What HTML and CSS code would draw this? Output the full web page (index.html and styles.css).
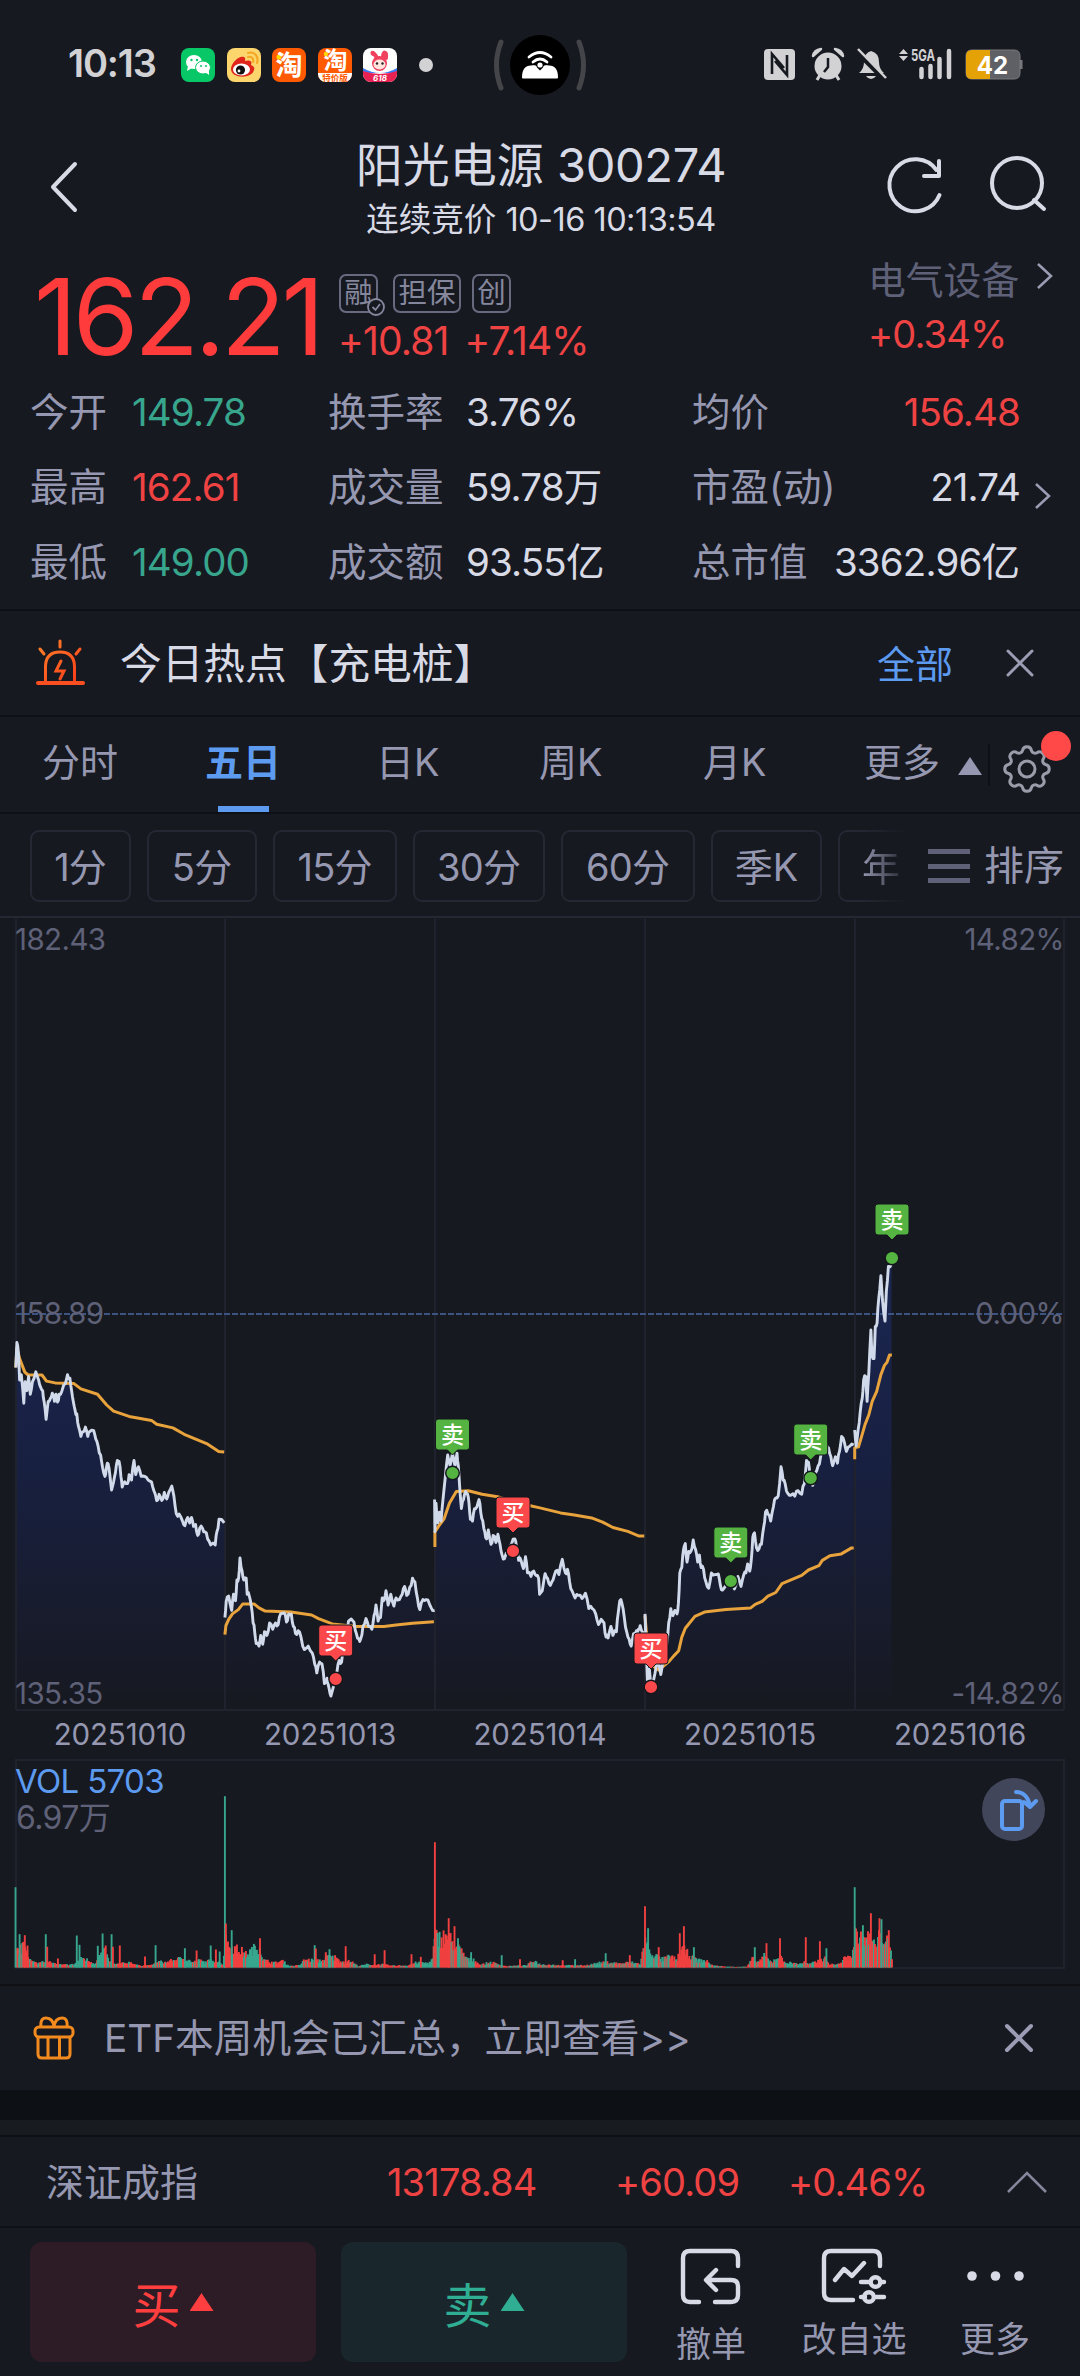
FILE: index.html
```html
<!DOCTYPE html>
<html lang="zh-CN">
<head>
<meta charset="utf-8">
<title>阳光电源 300274</title>
<link rel="stylesheet" href="styles.css">
</head>
<body>
<div class="screen">
  <div class="status">
    <span class="clock">10:13</span>
    <div class="apps">
      <svg class="app" viewBox="0 0 34 34"><rect width="34" height="34" rx="8" fill="#08c767"/><ellipse cx="13" cy="14" rx="8" ry="7" fill="#fff"/><path d="M7 18l-1 5 5-3z" fill="#fff"/><ellipse cx="22" cy="19.500" rx="7.500" ry="6.500" fill="#fff" stroke="#08c767"/><path d="M24 24l4 3v-5z" fill="#fff"/><circle cx="10.500" cy="12" r="1.200" fill="#08c767"/><circle cx="16" cy="12" r="1.200" fill="#08c767"/><circle cx="20" cy="18" r="1" fill="#08c767"/><circle cx="25" cy="18" r="1" fill="#08c767"/></svg>
      <svg class="app" viewBox="0 0 34 34"><rect width="34" height="34" rx="8" fill="#fcd56c"/><path d="M4 21c0-6 8-14 13-12 2 1 1 3 1 4 3-1 8-1 6 4 3 1 4 3 3 5-2 9-23 9-23-1z" fill="#e1251b"/><ellipse cx="14.500" cy="21.500" rx="8.500" ry="6" fill="#fff"/><circle cx="13.500" cy="22" r="4.600" fill="#111"/><circle cx="12" cy="23" r="1.400" fill="#fff"/><path d="M21 9c4-1 6 2 5 5M21 5c7-2 11 4 9 10" fill="none" stroke="#f5a623" stroke-width="2" stroke-linecap="round"/></svg>
      <svg class="app" viewBox="0 0 34 34"><rect width="34" height="34" rx="8" fill="#ff5a00"/><circle cx="7" cy="9" r="2.500" fill="#ffd800"/><text x="17" y="27" class="tao" font-size="27">淘</text></svg>
      <svg class="app" viewBox="0 0 34 34"><clipPath id="r"><rect width="34" height="34" rx="8"/></clipPath><g clip-path="url(#r)"><rect width="34" height="34" fill="#ff5a00"/><rect y="25" width="34" height="9" fill="#fff"/></g><circle cx="8" cy="6" r="2.200" fill="#ffd800"/><text x="17.500" y="21" class="tao" font-size="24">淘</text><text x="17" y="32.500" class="tao-sub" font-size="8.500">特价版</text></svg>
      <svg class="app" viewBox="0 0 34 34"><g clip-path="url(#r)"><rect width="34" height="34" fill="#fff"/><path d="M0 20q17 10 34 0v5H0z" fill="#3c7bf6"/><path d="M0 23q17 6 34 0v11H0z" fill="#e82252"/></g><path d="M14 10c-2-4-6-7-4-4M20 9c0-6 4-6 3 1" fill="none" stroke="#f0425f" stroke-width="4" stroke-linecap="round"/><circle cx="16.500" cy="15.500" r="7.500" fill="#f0425f"/><ellipse cx="16.500" cy="16.500" rx="6" ry="5" fill="#ffe4de"/><circle cx="14" cy="15.500" r="1.200" fill="#222"/><circle cx="19.500" cy="15.500" r="1.200" fill="#222"/><text x="17" y="32.500" class="promo" font-size="8">618</text></svg>
      <i class="dot"></i>
    </div>
    <svg class="island" viewBox="490 33 100 64"><circle cx="540" cy="65" r="30" fill="#000"/><path d="M501 42q-9 23 0 46M579 42q9 23 0 46" fill="none" stroke="#444549" stroke-width="5" stroke-linecap="round"/><path d="M522 77.500c0-8 3-12 9-12 3 0 5-1 6 2l3 3 3-3c1-3 3-2 6-2 6 0 9 4 9 12q0 1-1 1h-34q-1 0-1-1z" fill="#fff"/><path d="M529 57q11-9 22 0M533 62q7-6 14 0" fill="none" stroke="#fff" stroke-width="2.800" stroke-linecap="round"/><circle cx="540" cy="65" r="2.600" fill="#fff"/></svg>
    <svg class="tray" viewBox="760 44 264 42">
      <rect x="764" y="49" width="31" height="31" rx="4" fill="#d2d2d4"/><path d="M772 74V54l12 14M787 55v20L775 61" fill="none" stroke="#171921" stroke-width="2.600"/>
      <g fill="#d2d2d4"><circle cx="828" cy="66" r="13.500"/><path d="M813 56q1-6 8-7zM843 56q-1-6-8-7z" stroke="#d2d2d4" stroke-width="2.500" stroke-linejoin="round"/></g><path d="M820 75l-3 5M836 75l3 5" stroke="#d2d2d4" stroke-width="3"/><path d="M828 58v9l-4 5" fill="none" stroke="#171921" stroke-width="2.500"/>
      <path d="M859 73q5-4 5-11 0-9 7-11 8 2 8 11 0 7 5 11zM866 76h10q-2 3-5 3t-5-3z" fill="#d2d2d4"/><path d="M856 51l29 29" stroke="#171921" stroke-width="5"/><path d="M858 49l28 29" stroke="#d2d2d4" stroke-width="2.500"/>
      <path d="M899 54l4.500-5 4.500 5zM899 56l4.500 5 4.500-5z" fill="#d2d2d4"/><text x="911" y="61" font-size="16" font-weight="700" fill="#d2d2d4" textLength="24" lengthAdjust="spacingAndGlyphs">5GA</text>
      <path d="M921.500 69v8M930.500 66v11M939.500 59v18M949 51v26" stroke="#d2d2d4" stroke-width="4.500" stroke-linecap="round"/>
      <path d="M972 50h42q6 0 6 6v17q0 6-6 6h-42q-6 0-6-6V56q0-6 6-6z" fill="#5f6065" stroke="#77787d"/><path d="M990 50v29h-18q-6 0-6-6V56q0-6 6-6z" fill="#e5a207"/><rect x="1020" y="60" width="2.500" height="9" fill="#77787d"/><text x="992.500" y="73.500" font-size="24" font-weight="700" fill="#fff" text-anchor="middle">42</text>
    </svg>
  </div>

  <div class="header">
    <svg class="back" viewBox="0 0 34 54"><path d="M28 4L6 27l22 23"/></svg>
    <div class="titles"><div class="title">阳光电源 <span class="n">300274</span></div><div class="subtitle">连续竞价 <span class="n">10-16 10:13:54</span></div></div>
    <svg class="tools" viewBox="884 152 166 64"><path d="M939.500 195a26 26 0 1 1-3-25M939 161v15h-15"/><circle cx="1017" cy="183" r="25"/><path d="M1034 200l10 9"/></svg>
  </div>

  <div class="quote">
    <div class="price n">162.21</div>
    <div class="moves">
      <div class="tags"><span class="tag">融<svg viewBox="0 0 18 18"><circle cx="9" cy="9" r="8"/><path d="M5.500 9l3 3 4.500-6"/></svg></span><span class="tag wide">担保</span><span class="tag">创</span></div>
      <div class="change n"><span>+10.81</span><span>+7.14%</span></div>
    </div>
    <div class="sector"><div class="sector-name">电气设备<svg viewBox="0 0 18 28"><path d="M2 2l13 12L2 26"/></svg></div><div class="sector-pct n">+0.34%</div></div>
  </div>

  <div class="stats">
    <span>今开</span><b class="n down">149.78</b><span>换手率</span><b class="n">3.76%</b><span>均价</span><b class="n up end">156.48</b><i></i>
    <span>最高</span><b class="n up">162.61</b><span>成交量</span><b><em class="n">59.78</em>万</b><span>市盈<em>(动)</em></span><b class="n end">21.74</b><i><svg viewBox="0 0 18 28"><path d="M2 2l13 12L2 26"/></svg></i>
    <span>最低</span><b class="n down">149.00</b><span>成交额</span><b><em class="n">93.55</em>亿</b><span>总市值</span><b class="end"><em class="n">3362.96</em>亿</b><i></i>
  </div>

  <div class="hot">
    <svg class="siren" viewBox="36 636 48 50"><defs><linearGradient id="s" gradientUnits="userSpaceOnUse" x1="40" y1="640" x2="80" y2="684"><stop stop-color="#ff8228"/><stop offset="1" stop-color="#fa3519"/></linearGradient></defs><path d="M45.500 680v-15q0-15 14.500-15t14.500 15v15M60 639v6M40 647l4 5M80 647l-4 5M61 659l-5 10h8l-4 8" stroke="url(#s)"/><path d="M38 681h45" stroke="#f94f21" stroke-width="4"/></svg>
    <span class="hot-text">今日热点【充电桩】</span><span class="all">全部</span>
    <svg class="close" viewBox="0 0 28 28"><path d="M2 2l24 24M26 2L2 26"/></svg>
  </div>

  <div class="tabs">
    <span>分时</span><span class="on">五日</span><span>日K</span><span>周K</span><span>月K</span><span class="more">更多<i class="tri"></i></span>
    <div class="gear"><svg viewBox="-25 -25 50 50"><path id="gear"/><circle r="8"/></svg><i class="badge"></i></div>
  </div>

  <div class="pills">
    <span><em class="n">1</em>分</span><span><em class="n">5</em>分</span><span><em class="n">15</em>分</span><span><em class="n">30</em>分</span><span><em class="n">60</em>分</span><span>季K</span><span class="cut">年</span>
    <div class="sort"><i class="bars"></i>排序</div>
  </div>

  <svg class="chart" viewBox="0 918 1080 1066">
    <defs><linearGradient id="area" gradientUnits="userSpaceOnUse" x1="0" y1="1265" x2="0" y2="1705"><stop stop-color="#1b2752"/><stop offset=".45" stop-color="#182041"/><stop offset="1" stop-color="#171921"/></linearGradient></defs>
    <g id="fill" fill="url(#area)"></g>
    <path class="grid" d="M16 919V1710M225 919V1710M435 919V1710M645 919V1710M855 919V1710M1064 919V1710M16 1710H1064M16 1968V1760H1064V1968Z"/>
    <path class="zero" d="M16 1314H1064"/>
    <g class="axis"><text x="15" y="950">182.43</text><text x="15" y="1324">158.89</text><text x="15" y="1704">135.35</text><g text-anchor="end"><text x="1064" y="950">14.82%</text><text x="1064" y="1324">0.00%</text><text x="1064" y="1704">-14.82%</text></g></g>
    <g class="dates"><text x="120" y="1745">20251010</text><text x="330" y="1745">20251013</text><text x="540" y="1745">20251014</text><text x="750" y="1745">20251015</text><text x="960" y="1745">20251016</text></g>
    <g id="avg" class="avg"></g><g id="price" class="line"></g><g id="marks"></g>
    <text class="vol" x="15" y="1793">VOL 5703</text><text class="vol-max" x="16" y="1829">6.97<tspan letter-spacing="0">万</tspan></text>
    <g id="volume"></g>
    <circle cx="1013.500" cy="1809.500" r="31.500" fill="#42465a"/><g class="rotate"><rect x="1002" y="1801" width="20" height="28" rx="3"/><path d="M1016 1792q11 0 14 14M1024 1802l6 5 6-6"/></g>
  </svg>

  <div class="banner">
    <svg class="gift" viewBox="32 2014 44 46"><rect x="35" y="2026" width="38" height="10" rx="4"/><path d="M38 2036v17q0 4 4 4h24q4 0 4-4v-17M48 2036v21M59.500 2036v21M41 2026q-1-9 5-9 7 0 8 9 1-9 8-9 6 0 5 9"/></svg>
    <span>ETF本周机会已汇总，立即查看&gt;&gt;</span>
    <svg class="close thick" viewBox="0 0 28 28"><path d="M2 2l24 24M26 2L2 26"/></svg>
  </div>
  <div class="band"></div>
  <div class="index">
    <span class="index-name">深证成指</span><span class="n i1">13178.84</span><span class="n i2">+60.09</span><span class="n i3">+0.46%</span>
    <svg viewBox="0 0 42 24"><path d="M2 22L21 3l19 19"/></svg>
  </div>
  <div class="actions">
    <div class="buy">买<i class="tri"></i></div><div class="sell">卖<i class="tri"></i></div>
    <div class="act a1"><svg viewBox="682 2247 60 58"><path d="M739 2266v-8q0-7-7-7h-41q-7 0-7 7v37q0 7 7 7h9M716 2302h16q7 0 7-7v-9q0-6-7-6h-24M717 2270l-10 10 10 10"/></svg><span>撤单</span></div>
    <div class="act a2"><svg viewBox="820 2247 66 58"><path d="M879 2266v-8q0-7-7-7h-42q-7 0-7 7v35q0 7 7 7h22M834 2280l9-11 8 7 12-13M860 2282h8M880 2282h3M860 2297h4M875 2297h8"/><circle cx="874.500" cy="2282" r="4.800"/><circle cx="868" cy="2297" r="4.800"/></svg><span>改自选</span></div>
    <div class="act a3"><svg viewBox="960 2247 66 58"><g class="dots"><circle cx="970" cy="2276" r="4.800"/><circle cx="993.500" cy="2276" r="4.800"/><circle cx="1017" cy="2276" r="4.800"/></g></svg><span>更多</span></div>
  </div>
</div>
<script src="chart.js"></script>
</body>
</html>
```
FILE: styles.css
```css
* { box-sizing: border-box; }
body { margin: 0; background: #171921; color: #d8dbe6; font-family: Inter, "Noto Sans CJK SC", sans-serif; font-size: 38px; }
svg { display: block; flex: none; overflow: visible; fill: none; }
em, b, i { font-style: normal; font-weight: 400; }
.n { letter-spacing: -0.022em; }
.screen { width: 1080px; height: 2376px; overflow: hidden; display: flex; flex-direction: column; }
.screen > * { flex: none; }
.tri { display: inline-block; width: 24px; height: 18px; background: currentColor; clip-path: polygon(50% 0, 100% 100%, 0 100%); }

.status { height: 130px; display: flex; align-items: center; padding: 0 56px 0 68px; }
.clock { width: 113px; font-size: 38px; font-weight: 600; letter-spacing: -0.03em; color: #d2d2d4; line-height: 40px; margin-top: -4px; }
.apps { display: flex; gap: 11.6px; align-items: center; width: 309px; }
.app { width: 34px; height: 34px; }
.tao { fill: #fff; font-weight: 700; text-anchor: middle; }
.tao-sub { fill: #ff5a00; font-weight: 700; text-anchor: middle; }
.promo { fill: #fff; font-weight: 700; text-anchor: middle; font-style: italic; }
.dot { width: 14px; height: 14px; border-radius: 50%; background: #d2d2d4; margin-left: 10px; }
.island { width: 100px; height: 64px; }
.tray { width: 264px; height: 42px; margin-left: auto; }

.header { height: 125px; display: flex; padding: 0 30px 0 47px; justify-content: space-between; align-items: center; }
.header svg { stroke: #d8dbe6; stroke-width: 4; stroke-linecap: round; stroke-linejoin: round; }
.back { width: 34px; height: 54px; margin-top: -11px; }
.titles { width: 480px; margin-left: 117px; text-align: center; align-self: flex-start; padding-top: 10px; white-space: nowrap; }
.title { font-size: 47px; line-height: 50px; }
.title .n { letter-spacing: -0.007em; }
.subtitle { font-size: 32.500px; line-height: 40px; margin-top: 10px; }
.subtitle .n { letter-spacing: -0.016em; }
.tools { width: 166px; height: 64px; margin-top: -17px; }

.quote { height: 120px; display: flex; padding-left: 34px; }
.price { width: 304px; font-size: 106px; line-height: 123px; color: #ff3b3b; letter-spacing: -0.04em; }
.moves { padding-top: 19px; flex: 1; }
.tags { display: flex; gap: 11px; margin-left: 1px; }
.tag { position: relative; width: 39px; height: 39px; border: 2px solid #686b80; border-radius: 7px; font-size: 28.500px; line-height: 34px; color: #85889d; display: flex; justify-content: center; }
.tag:first-child { margin-right: 4px; }
.tag.wide { width: 68px; }
.tag svg { position: absolute; right: -9px; bottom: -5px; width: 18px; height: 18px; fill: #171921; stroke: #85889d; stroke-width: 1.800; }
.change { display: flex; gap: 16px; color: #ef4343; font-size: 39px; line-height: 40px; margin-top: 8px; }
.sector { width: 212px; }
.sector-name { display: flex; align-items: center; gap: 17px; color: #5e6177; font-size: 37.800px; line-height: 50px; }
.sector-name svg, .stats svg { width: 18px; height: 28px; stroke: #9a9db3; stroke-width: 2.500; }
.sector-name svg { margin-top: -8px; }
.sector-pct { color: #ef4343; font-size: 38px; line-height: 40px; margin-top: 9px; }

.stats { height: 225px; padding-left: 30px; display: grid; grid-template-columns: 102px 196px 138px 226px 148px 180px 50px; grid-auto-rows: 75px; line-height: 75px; white-space: nowrap; font-size: 38.500px; color: #9598b0; }
.stats b { color: #d8dbe6; }
.stats b.up { color: #ef4343; }
.stats b.down { color: #37a68d; }
.stats b.end { justify-self: end; }
.stats i { padding: 32px 0 0 14px; }

.hot { height: 106px; margin-top: 9px; border-top: 2px solid #0e1016; display: flex; align-items: center; padding: 0 46px 0 36px; }
.siren { width: 48px; height: 50px; stroke-width: 3; stroke-linecap: round; }
.hot-text { font-size: 41.700px; flex: 1; padding: 2px 0 0 36px; line-height: 60px; }
.all { color: #5c9bf0; margin: -3px 53px 0 0; }
.close { width: 28px; height: 28px; stroke: #9a9db3; stroke-width: 3; stroke-linecap: round; }
.close.thick { stroke-width: 4; }

.tabs { height: 97px; border-top: 2px solid #0e1016; display: flex; color: #9598b0; line-height: 91px; padding-left: 42px; }
.tabs > span { width: 163px; height: 95px; white-space: nowrap; }
.tabs > span:nth-child(2) { width: 171px; }
.tabs > span:nth-child(3) { width: 163px; }
.tabs > span:nth-child(4) { width: 164px; }
.tabs > span:nth-child(5) { width: 161px; }
.tabs .on { color: #5c9bf0; font-weight: 700; background: linear-gradient(#5c9bf0, #5c9bf0) 13px 100% / 51px 6px no-repeat; }
.tabs .more { width: 124px; }
.tabs .tri { margin-left: 18px; vertical-align: 1px; }
.gear { position: relative; width: 92px; padding: 27px 0 0 14px; background: linear-gradient(#0e1016, #0e1016) 0 27px / 2px 42px no-repeat; }
.gear svg { width: 50px; height: 50px; stroke: #9a9caa; stroke-width: 3; stroke-linejoin: round; }
.badge { position: absolute; left: 53px; top: 14px; width: 30px; height: 30px; border-radius: 50%; background: #ff4848; }

.pills { height: 106px; border-top: 2px solid #0e1016; border-bottom: 2px solid #252733; display: flex; padding: 16px 0 0 30px; color: #9598b0; }
.pills > span { height: 72px; border: 2px solid #252733; border-radius: 9px; line-height: 70px; margin-right: 16px; width: 101px; text-align: center; white-space: nowrap; flex: none; }
.pills > span:nth-child(2) { width: 110px; }
.pills > span:nth-child(3) { width: 124px; }
.pills > span:nth-child(4) { width: 132px; }
.pills > span:nth-child(5) { width: 134px; }
.pills > span:nth-child(6) { width: 111px; }
.pills > .cut { width: 68px; text-align: left; padding-left: 22px; border-right: 0; border-radius: 9px 0 0 9px; mask-image: linear-gradient(90deg, #000 35%, transparent 105%); margin-right: 0; }
.sort { display: flex; align-items: center; gap: 14px; height: 72px; font-size: 40px; margin-left: 22px; white-space: nowrap; line-height: 70px; }
.bars { width: 42px; height: 34px; background: linear-gradient(#5e6177 5px, transparent 5px 14.500px, #5e6177 14.500px 19.500px, transparent 19.500px 29px, #5e6177 29px); }

.chart { width: 1080px; height: 1066px; font-size: 29.500px; letter-spacing: -0.02em; }
.grid { stroke: #20232e; stroke-width: 2; }
.zero { stroke: #3c5482; stroke-width: 2; stroke-dasharray: 6 2; }
.axis { fill: #5e6177; }
.dates { fill: #9598b0; text-anchor: middle; letter-spacing: -0.005em; }
.avg { stroke: #e8a33c; stroke-width: 3; stroke-linejoin: round; }
.line { stroke: #d0daea; stroke-width: 2.900; stroke-linejoin: round; }
.mark-text { fill: #fff; font-size: 23px; text-anchor: middle; letter-spacing: 0; font-weight: 500; }
.vol { fill: #5c9bf0; font-size: 33px; letter-spacing: -0.02em; }
.vol-max { fill: #5e6177; font-size: 32px; }
.rotate { stroke: #5c9bf0; stroke-width: 4; stroke-linecap: round; stroke-linejoin: round; }

.banner { height: 106px; border-top: 2px solid #0e1016; display: flex; align-items: center; padding: 0 47px 0 32px; color: #9598b0; font-size: 38.700px; }
.banner span { flex: 1; padding-left: 28px; line-height: 60px; letter-spacing: 0; }
.gift { width: 44px; height: 46px; stroke: #f28a1e; stroke-width: 3; }
.band { height: 45px; border-bottom: 15px solid #181c20; background: #0d1014; }
.index { height: 91px; border-top: 2px solid #0e1016; display: flex; align-items: center; padding-left: 46px; color: #ef4343; line-height: 60px; }
.index-name { width: 341px; color: #9598b0; }
.i1 { width: 228px; }
.i2 { width: 173px; }
.i3 { width: 218px; }
.index svg { width: 42px; height: 24px; stroke: #85889d; stroke-width: 2.500; }
.actions { height: 150px; border-top: 2px solid #0e1016; padding: 14px 0 0 30px; display: flex; color: #9598b0; }
.buy, .sell { width: 286px; height: 120px; margin-right: 25px; border-radius: 12px; font-size: 48px; display: flex; align-items: center; justify-content: center; gap: 9px; background: #2d1c25; color: #ff3f3f; }
.sell { background: #19262c; color: #2fae93; }
.act { display: flex; flex-direction: column; align-items: center; padding-top: 5px; font-size: 35px; line-height: 40px; gap: 14px; }
.act svg { height: 58px; stroke: #d8dbe6; stroke-width: 4.400; stroke-linecap: round; stroke-linejoin: round; }
.act svg .dots { fill: #d8dbe6; stroke: none; }
.a1 { width: 70px; margin-left: 24px; gap: 19px; }
.a1 svg { width: 60px; }
.a2 { width: 106px; margin-left: 55px; }
.a2 svg, .a3 svg { width: 66px; }
.a3 { width: 70px; margin-left: 53px; }
```
FILE: chart.js
```js
const NS = "http://www.w3.org/2000/svg";
const px = u => u / 2.904, py = v => 1180 + v / 2.8;
const parse = s => s.trim().split(/\s+/).map(p => p.split(",").map(Number));
const shift = (s, d) => parse(s).map(([u, v]) => [u + d, v]);
const add = (id, tag, attrs, text) => {
  const e = document.createElementNS(NS, tag);
  for (const k in attrs) e.setAttribute(k, attrs[k]);
  if (text) e.textContent = text;
  document.getElementById(id).appendChild(e);
};
let seed = 7;
const rnd = () => (seed = (seed * 16807) % 2147483647) / 2147483647;

const prices = [
  parse("46,525 49,455 54,490 57,560 62,545 69,625 73,565 78,590 83,550 88,600 94,565 104,537 112,560 118,580 124,590 128,620 134,670 140,620 146,612 152,597 158,620 163,600 167,622 172,600 180,590 190,570 196,545 203,555 208,590 213,620 218,645 223,655 228,690 235,718 240,705 248,692 255,718 260,705 272,702 278,725 285,745 292,770 298,805 305,830 309,805 314,795 319,825 324,868 330,845 335,820 341,785 346,788 351,830 355,860 362,845 370,850 375,825 382,840 389,785 394,825 402,803 410,830 420,830 430,840 440,845 447,870 455,898 462,880 470,897 477,875 484,893 490,875 499,857 505,885 512,935 520,935 530,955 537,968 545,945 551,960 556,945 562,970 568,965 574,995 580,975 588,975 595,985 603,1005 612,1022 625,1022 630,985 636,950 651,960"),
  parse("653,1225 657,1180 664,1165 668,1185 673,1205 678,1160 684,1178 688,1120 693,1115 697,1058 703,1095 708,1120 715,1115 718,1160 724,1165 730,1195 735,1240 740,1268 744,1298 752,1305 757,1275 763,1300 768,1265 775,1275 783,1240 792,1258 800,1240 808,1245 815,1215 825,1212 832,1238 838,1215 846,1215 852,1250 858,1270 866,1262 874,1280 884,1315 895,1305 907,1325 914,1355 920,1380 928,1350 935,1355 942,1410 950,1395 956,1425 961,1445 968,1420 978,1380 985,1345 992,1350 998,1310 1005,1270 1012,1235 1028,1238 1035,1270 1042,1285 1048,1283 1054,1250 1063,1228 1070,1250 1080,1258 1086,1220 1092,1190 1098,1235 1105,1225 1110,1170 1116,1175 1121,1150 1127,1190 1135,1160 1144,1193 1150,1170 1160,1175 1168,1160 1175,1138 1181,1163 1190,1140 1198,1115 1205,1125 1212,1170 1219,1203 1228,1175 1238,1175 1248,1190 1256,1205 1262,1205"),
  parse("1262,895 1263,985 1266,905 1271,960 1276,930 1281,955 1286,900 1293,835 1300,770 1307,800 1314,765 1321,800 1327,765 1331,800 1335,860 1340,920 1346,895 1352,872 1358,880 1362,905 1366,950 1372,955 1378,920 1385,915 1391,895 1396,930 1402,955 1408,985 1413,1005 1418,980 1426,1020 1432,995 1440,1015 1446,992 1452,1020 1458,1050 1465,1060 1475,1045 1485,1020 1495,1005 1500,1030 1506,1065 1514,1068 1520,1088 1526,1055 1532,1100 1542,1110 1550,1095 1558,1108 1564,1115 1567,1160").concat(
  shift("3,1155 10,1130 15,1102 22,1115 30,1135 38,1120 46,1095 55,1105 65,1062 74,1100 80,1090 86,1125 93,1150 102,1170 112,1163 122,1172 132,1157 142,1200 152,1200 162,1215 170,1245 178,1230 186,1240 192,1280 198,1282 206,1250 212,1275 222,1265 227,1215 232,1178 238,1185 245,1225 252,1265 259,1285 265,1305 272,1270 280,1262 286,1258 291,1248 297,1265 304,1268", 1568)),
  shift("305,1215 308,1300 312,1400 318,1370 322,1415 330,1400 338,1360 345,1350 351,1385 358,1340 368,1300 374,1240 380,1200 386,1220 392,1205 398,1215 402,1185 406,1100 412,1085 417,1035 422,1018 427,1070 432,1040 438,1040 445,1008 452,1035 458,1070 463,1050 468,1085 475,1090 482,1125 490,1143 498,1100 508,1105 518,1103 524,1135 530,1148 540,1135 553,1125 565,1145 575,1110 584,1138 592,1105 598,1100 603,1075 609,1095 614,1060 618,1000 623,988 629,1030 636,1033 643,1020 650,970 655,930 662,935 670,955 678,915 685,890 692,885 700,803 706,840 712,850 720,878 730,882 740,885 750,870 760,880 768,850 774,785 780,790 786,830 792,855 800,820 808,800 815,775 822,740 830,735 838,750 845,775 850,800 858,775 864,793 870,760 876,718 884,735 890,760 900,745 911,742", 1568),
  shift("914,700 918,745 924,700 930,650 936,610 940,560 946,550 950,620 955,540 958,480 961,420 964,490 970,500 974,410 979,400 984,330 990,268 995,340 1002,395 1006,310 1012,242 1021,235", 1568)
];
const averages = [
  parse("46,525 49,470 57,500 72,538 82,546 122,546 135,563 160,568 215,570 235,585 283,600 310,630 330,647 375,662 440,673 455,684 502,694 535,712 600,738 635,760 651,762"),
  parse("653,1273 656,1248 664,1230 675,1215 692,1203 705,1187 738,1187 752,1198 770,1207 845,1210 905,1218 925,1228 965,1243 1035,1250 1115,1250 1150,1246 1198,1241 1260,1237"),
  parse("1263,1028 1263,985 1275,968 1290,948 1305,905 1325,872 1360,870 1400,880 1445,887 1490,900 1540,912 1568,918 1628,932 1668,938 1718,946 1750,958 1780,973 1823,984 1856,997 1871,997"),
  shift("305,1220 309,1265 320,1330 330,1362 345,1372 375,1348 388,1333 403,1318 412,1280 422,1255 450,1222 478,1210 540,1203 612,1198 625,1188 645,1180 662,1165 685,1155 703,1130 760,1107 780,1092 810,1080 820,1065 842,1052 875,1047 905,1030 911,1030", 1568),
  shift("914,782 914,750 925,747 932,725 944,685 955,658 965,620 978,592 990,545 1000,520 1008,510 1015,490 1022,490", 1568)
];
const path = pts => pts.map(([u, v], i) => (i ? "L" : "M") + px(u).toFixed(1) + " " + py(v).toFixed(1)).join("");
// Adds a tick between key points so the line keeps its minute-level texture.
const ticks = pts => pts.flatMap((p, i) => {
  const q = pts[i + 1];
  if (!q || q[0] - p[0] < 4) return [p];
  return [p, [(p[0] + q[0]) / 2, (p[1] + q[1]) / 2 + (rnd() - 0.5) * 16]];
});
prices.forEach(day => {
  const d = path(ticks(day));
  add("fill", "path", { d: d + `V1709H${px(day[0][0]).toFixed(1)}Z` });
  add("price", "path", { d });
});
averages.forEach(day => add("avg", "path", { d: path(day) }));

[[452.5, 1473, 1], [513, 1551, 0], [335.7, 1679, 0], [651, 1687, 0], [730.8, 1581, 1], [810.7, 1478, 1], [892, 1258, 1]].forEach(([x, y, sell]) => {
  const fill = sell ? "#54b341" : "#fb484b", t = y - 54;
  add("marks", "circle", { cx: x, cy: y, r: 6.8, fill, stroke: "#14171c", "stroke-width": 1.4 });
  add("marks", "path", { d: `M${x - 14} ${t}h28q3 0 3 3v25q0 3-3 3h-9l-5 5-5-5h-9q-3 0-3-3v-25q0-3 3-3z`, fill, stroke: "#14171c", "stroke-width": 1 });
  add("marks", "text", { x, y: t + 24, class: "mark-text" }, sell ? "卖" : "买");
});

// Volume envelope per session: position, height, share of red bars.
const env = parse("46,60,.6 75,85,.7 90,25,.8 110,15,.2 125,30,.1 140,20,.7 180,10,.8 215,12,.2 240,37,.5 265,22,.2 275,15,.2 292,52,.1 305,60,.3 318,22,.3 335,12,.8 380,20,.9 400,8,.8 440,8,.5 462,22,.7 485,20,.8 512,32,.2 535,35,.1 560,20,.7 580,27,.4 595,20,.2 620,30,.4 648,12,.4 653,110,.8 665,85,.7 680,75,.7 700,65,.7 715,50,.1 740,75,.2 755,80,.4 765,28,.8 800,18,.8 820,26,.2 840,6,.4 870,8,.4 885,30,.4 905,28,.7 920,25,.4 940,28,.5 955,45,.2 970,35,.9 1000,22,.9 1020,24,.5 1040,5,.5 1065,12,.8 1085,10,.8 1110,12,.9 1135,7,.6 1185,8,.6 1205,18,.2 1245,18,.3 1256,30,.3 1263,120,.6 1280,115,.9 1300,125,.9 1320,85,.7 1335,70,.4 1360,30,.3 1375,32,.6 1395,10,.4 1425,20,.6 1450,12,.4 1470,5,.5 1530,8,.6 1550,28,.2 1568,12,.5 1610,10,.8 1640,8,.5 1700,8,.5 1740,18,.4 1770,20,.4 1800,15,.5 1830,20,.5 1860,14,.6 1873,110,.1 1885,60,.2 1900,50,.5 1920,30,.5 1945,42,.8 1965,30,.6 1980,75,.9 2005,45,.9 2025,28,.3 2050,26,.4 2070,8,.5 2110,3,.5 2170,3,.7 2185,35,.9 2200,20,.8 2220,45,.7 2240,20,.5 2262,45,.8 2280,20,.2 2320,14,.2 2335,20,.4 2350,12,.4 2370,22,.5 2395,35,.8 2410,12,.5 2435,12,.8 2450,32,.6 2475,45,.2 2483,130,.8 2500,110,.7 2525,115,.7 2545,80,.5 2557,135,.6 2580,90,.8 2592,35,.9");
const bar = (u, h, red) => add("volume", "path", { d: `M${px(u).toFixed(1)} 1967.500v${(-h / 3).toFixed(1)}`, stroke: red ? "#f04040" : "#37a68d", "stroke-width": 1.9 });
for (let u = 47, k = 0; u < 2592; u += 2.9) {
  while (env[k + 1] && env[k + 1][0] < u) k++;
  const a = env[k], b = env[k + 1] || a, f = Math.min(1, Math.max(0, (u - a[0]) / (b[0] - a[0] || 1)));
  bar(u, (a[1] + (b[1] - a[1]) * f) * (0.5 + 0.5 * rnd()), rnd() < a[2]);
}
parse("45,241,0 57,100,0 72,97,1 80,66,1 133,100,0 137,62,1 168,27,1 223,96,0 231,68,0 284,65,0 298,102,0 307,66,1 324,100,0 328,62,1 348,66,1 421,33,1 452,67,0 537,58,0 571,51,1 612,66,0 627,54,1 638,48,0 653,514,0 656,132,1 673,112,0 755,88,1 914,67,0 917,57,1 946,46,1 957,55,0 973,37,1 1004,64,1 1088,40,1 1117,52,1 1195,40,1 1222,32,1 1263,376,1 1303,148,1 1320,124,1 1330,88,0 1368,46,0 1457,37,0 1510,25,1 1634,22,1 1670,25,0 1759,43,0 1829,37,1 1873,184,1 1882,118,0 1913,61,1 1974,103,1 1986,124,1 2015,61,0 2192,61,0 2226,73,1 2265,88,1 2340,91,1 2381,79,1 2400,58,0 2482,241,0 2506,127,0 2529,163,1 2554,148,1 2560,145,0 2581,112,1").forEach(s => bar(...s));

// Eight-lobed cog: rounded teeth joined by concave valleys.
const at = deg => (19 * Math.sin(deg * Math.PI / 180)).toFixed(2) + " " + (-19 * Math.cos(deg * Math.PI / 180)).toFixed(2);
let g = "M" + at(-13.5);
for (let i = 0; i < 8; i++) g += "A4.500 4.500 0 0 1 " + at(i * 45 + 13.5) + "A3.800 3.800 0 0 0 " + at(i * 45 + 31.5);
document.getElementById("gear").setAttribute("d", g + "Z");
```
